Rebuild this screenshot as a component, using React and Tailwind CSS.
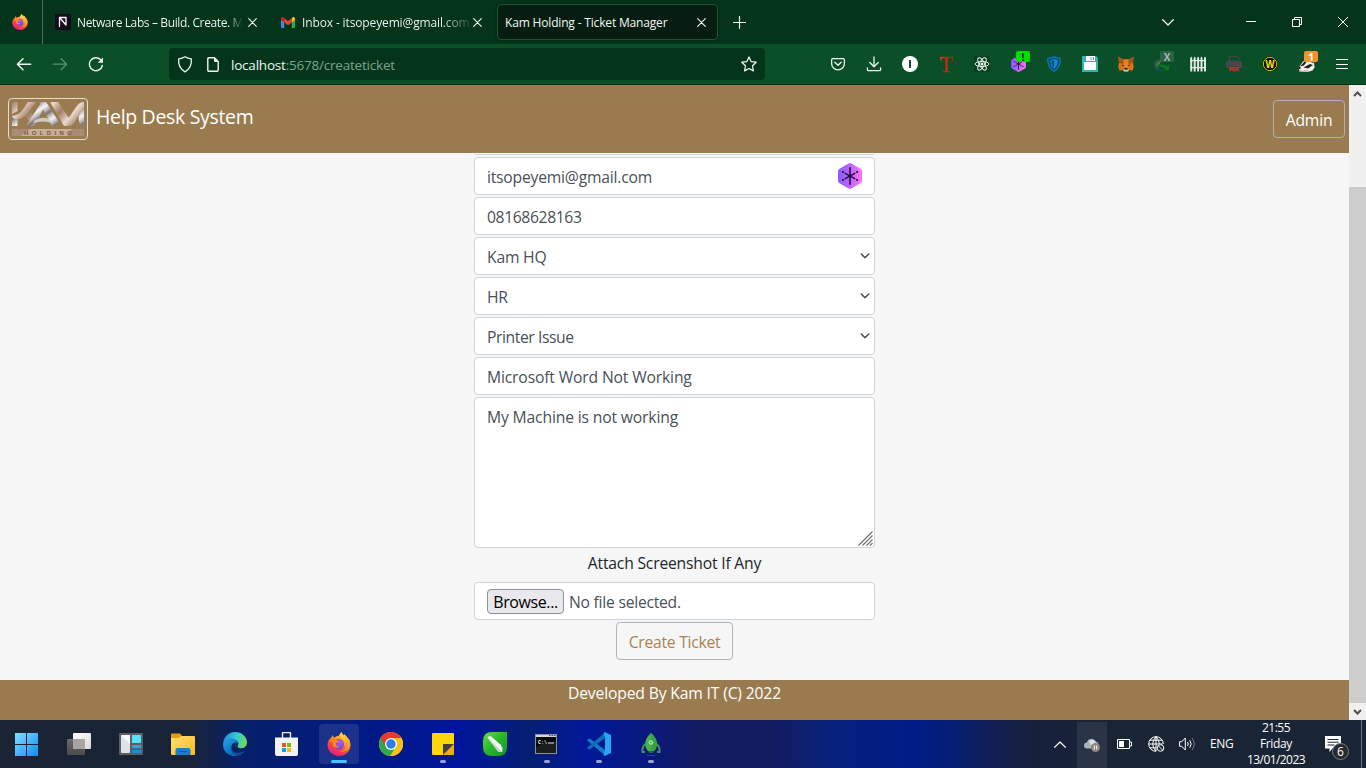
import React from "react";

const stroke = { fill: "none", stroke: "currentColor", strokeLinecap: "round", strokeLinejoin: "round" };

function Svg({ w = 16, h = w, vb, className = "", children, ...rest }) {
  return (
    <svg width={w} height={h} viewBox={vb || `0 0 ${w} ${h}`} className={"block shrink-0 " + className} {...rest}>
      {children}
    </svg>
  );
}

function Firefox({ size, id }) {
  return (
    <Svg w={size} vb="0 0 24 24">
      <defs>
        <linearGradient id={id + "a"} x1="0.8" y1="0" x2="0.3" y2="1">
          <stop offset="0" stopColor="#fff44f" />
          <stop offset="0.35" stopColor="#ffa21c" />
          <stop offset="0.65" stopColor="#ff4a3d" />
          <stop offset="1" stopColor="#e31587" />
        </linearGradient>
        <radialGradient id={id + "b"} cx="0.6" cy="0.3" r="0.8">
          <stop offset="0" stopColor="#b45cff" />
          <stop offset="1" stopColor="#5b3fd0" />
        </radialGradient>
        <linearGradient id={id + "c"} x1="0.2" y1="0" x2="0.8" y2="1">
          <stop offset="0" stopColor="#ffe04a" />
          <stop offset="1" stopColor="#ff8a1a" />
        </linearGradient>
      </defs>
      <path d="M4.6 5.2C5 4.2 5.3 3.4 5.6 3c.2 1.200.8 2 1.500 2.600 1.200-.9 2.700-1.600 4.400-1.600 1-1.500 2-3 3.200-4 .2 1.600 1 2.600 2.100 3.600.2-.4.3-.8.3-1.300 2.200 1.700 3.400 3.600 3.900 5.600.3-.3.5-.7.6-1.100 1.200 2 1.900 4.200 1.900 6.200C23.500 19.200 18.400 24 12 24S.5 19.200.5 12.800c0-3 1.500-5.900 4.100-7.600z" fill={`url(#${id}a)`} />
      <circle cx="11.800" cy="12.300" r="5.200" fill={`url(#${id}b)`} />
      <path d="M14.700 0c-1.200 2.700-.6 4.800 1.100 6.800 1.700 1.900 2.600 4.100 1.500 6.700 1.500-.7 2.100-1.900 2.300-3.100 1 5.100-2.700 9.200-7.200 9.300 7.200 1 11.100-3.600 10.600-9.400-.3-2.700-2.200-5.200-5.900-7.900-.1.700-.2.900-.3 1.200C15.700 2.600 14.900 1.600 14.700 0z" fill={`url(#${id}c)`} />
      <path d="M2.500 9.500c2-1.800 4.200-2.100 6.500-1.400 1 .3 2 .7 3.200.8-.1.900-1.300 1.400-2.500 1.700-.9.300-1 1.300-.7 2.200.5 1.500 2 2 3.700 1.600-1.700 2.200-5.600 1.500-6.700-1.300-.5-1.400-.2-2.500.2-3.200-1.500-.5-2.700-.4-3.700-.4z" fill="#ff8a1f" />
    </Svg>
  );
}

function Gmail() {
  return (
    <Svg w={14} h={11} vb="0 0 28 22">
      <path d="M0 4v16c0 1.200.8 2 2 2h4.500V9z" fill="#4285f4" />
      <path d="M28 4v16c0 1.200-.8 2-2 2h-4.500V9z" fill="#34a853" />
      <path d="M21.500 3v8L28 6V3c0-2.800-3-4-5.200-2.200z" fill="#fbbc04" />
      <path d="M0 3v3l6.500 5V3L5.200.9C3-.8 0 .3 0 3z" fill="#c5221f" />
      <path d="M6.500 2.500v8.300l7.500 5.600 7.500-5.600V2.500L14 8.200z" fill="#ea4335" />
    </Svg>
  );
}

const Cross = ({ className = "" }) => (
  <Svg w={9} className={className}><path d="M.7.7l7.600 7.600M8.300.7L.7 8.300" {...stroke} strokeWidth="1.100" /></Svg>
);

function TabBar() {
  return (
    <div className="flex h-11 shrink-0 items-center bg-[#04341a] text-[12px] text-[#f4f8f5]">
      <div className="flex h-full w-[43px] items-center border-r border-[#4a6e58] pl-3">
        <Firefox size={16} id="ft" />
      </div>
      <div className="flex w-[225px] items-center pl-3">
        <Svg w={16}>
          <rect width="16" height="16" fill="#170b20" />
          <path d="M4.500 12.500V3.500l6.500 7.500V3.500M4.500 3.500H11M4.500 6v6.500" {...stroke} stroke="#fff" strokeWidth="1.300" />
        </Svg>
        <div className="ml-1.5 w-[166px] overflow-hidden whitespace-pre bg-linear-to-r from-white from-91% to-[#04341a] to-100% bg-clip-text pt-[2px] tracking-[-0.38px] text-transparent">Netware Labs – Build. Create. M</div>
        <Cross className="ml-[5px]" />
      </div>
      <div className="flex w-[229px] items-center pl-[13px]">
        <Gmail />
        <div className="ml-[7px] w-[167px] overflow-hidden whitespace-nowrap bg-linear-to-r from-white from-83% to-[#2b5239] to-100% bg-clip-text pt-[2px] tracking-[-0.13px] text-transparent">Inbox - itsopeyemi@gmail.com</div>
        <Cross className="ml-1" />
      </div>
      <div className="flex h-9 w-[221px] items-center rounded-[4px] border border-[#155a31] bg-[#071d11] pl-[7px] shadow-[0_0_3px_rgba(0,0,0,.5)]">
        <span className="w-[192px] pt-[2px] whitespace-nowrap tracking-[-0.17px]">Kam Holding - Ticket Manager</span>
        <Cross className="shrink-0" />
      </div>
      <Svg w={13} className="ml-[15px]"><path d="M6.500.5v12M.5 6.500h12" {...stroke} strokeWidth="1.200" /></Svg>
      <Svg w={12} h={7} className="ml-auto"><path d="M.7.7L6 6 11.300.7" {...stroke} strokeWidth="1.300" /></Svg>
      <Svg w={10} className="ml-[72px]"><path d="M0 4.500h10" stroke="#fff" /></Svg>
      <Svg w={10} className="ml-9"><path d="M.5 2.500h7v7h-7zM2.500 2.500v-2h7v7h-2" fill="none" stroke="#fff" /></Svg>
      <Svg w={10} className="mr-[18px] ml-9"><path d="M0 0l10 10M10 0L0 10" stroke="#fff" /></Svg>
    </div>
  );
}

function Hexagon({ w, h }) {
  return (
    <Svg w={w} h={h} vb="0 0 24 26">
      <defs>
        <linearGradient id="hexg" x1="0" x2="1">
          <stop offset="0.05" stopColor="#8b5cff" />
          <stop offset="0.5" stopColor="#bd65fb" />
          <stop offset="1" stopColor="#ff70f5" />
        </linearGradient>
      </defs>
      <path d="M10.600.5q1.400-.8 2.800 0l9 5.200q1.600.9 1.600 2.600v9.400q0 1.700-1.600 2.600l-9 5.200q-1.400.8-2.800 0l-9-5.200Q0 19.400 0 17.700V8.300q0-1.700 1.600-2.600z" fill="url(#hexg)" />
      <g stroke="#2a0f45" strokeLinecap="round">
        <path d="M12 4.800v16.400" strokeWidth="1.600" />
        <path d="M10.500 12.200L7.300 10.300M13.500 12.200l3.200-1.900M10.500 13.800L7.300 15.700M13.500 13.800l3.200 1.900" strokeWidth="1.400" />
        <path d="M5 9.100h.1M19 9.100h.1M5 16.900h.1M19 16.900h.1" strokeWidth="2" />
        <path d="M10.500 13h3" strokeWidth="1.500" />
      </g>
    </Svg>
  );
}

const Pocket = () => <Svg w={16}><path d="M2.800 2.700h10.400q1.200 0 1.200 1.200v3.600a6.400 6.400 0 0 1-12.800 0V3.900q0-1.200 1.200-1.200zM4.800 6.300L8 9.300l3.200-3" {...stroke} strokeWidth="1.300" /></Svg>;
const Download = () => <Svg w={16}><path d="M8 .8v9.700M3.800 6.500L8 10.700l4.200-4.200M1.400 12v1.500q0 1.200 1.200 1.200h10.800q1.200 0 1.200-1.200V12" {...stroke} strokeWidth="1.300" /></Svg>;
const CircleI = () => <Svg w={16}><circle cx="8" cy="8" r="8" fill="#fff" /><rect x="7" y="4" width="2" height="8" fill="#0b4f28" /></Svg>;
const LetterT = () => (
  <Svg w={24} h={32}>
    <defs><linearGradient id="tg" x1="0" x2="1"><stop offset="0" stopColor="#ef5a41" /><stop offset="0.5" stopColor="#d02a12" /><stop offset="1" stopColor="#6b1b08" /></linearGradient></defs>
    <text x="12" y="23.500" textAnchor="middle" fontFamily="Liberation Serif, serif" fontSize="23" textLength="13" lengthAdjust="spacingAndGlyphs" fill="url(#tg)" stroke="#b02a12" strokeWidth=".4">T</text>
  </Svg>
);
const ReactLogo = () => (
  <Svg w={16}>
    <rect width="16" height="16" fill="#0a4020" />
    <g fill="none" stroke="#e3efe7" strokeWidth="1">
      <ellipse cx="8" cy="8" rx="6.900" ry="2.600" />
      <ellipse cx="8" cy="8" rx="6.900" ry="2.600" transform="rotate(60 8 8)" />
      <ellipse cx="8" cy="8" rx="6.900" ry="2.600" transform="rotate(120 8 8)" />
    </g>
    <circle cx="8" cy="8" r="1.500" fill="#fff" />
  </Svg>
);
const BlueShield = () => (
  <Svg w={14} h={16}>
    <path d="M.8 2.300Q4.500 2 7 .8q2.500 1.200 6.200 1.500Q13.700 11.500 7 15.200.3 11.500.8 2.300z" fill="#07486a" stroke="#0a7cb8" strokeWidth="1.300" />
    <path d="M3.800 4.300Q5.800 4 7 3.500q1.200.5 3.200.8Q10.400 9.500 7 12 3.600 9.500 3.800 4.300z" fill="#07486a" stroke="#0a8bd0" strokeWidth="1.200" />
    <path d="M7 3.500v8.500Q10.400 9.500 10.200 4.300 8 4 7 3.500z" fill="#0a8bd0" />
  </Svg>
);
const Floppy = () => <Svg w={16}><path d="M0 0h14l2 2v14H0z" fill="#2fb5ae" /><path d="M2 6h12v8H2zM4 0h9v5H4z" fill="#fff" /><path d="M8.500 1h1v3h-1zM11 1h1v3h-1z" fill="#2fb5ae" /></Svg>;
const Fox = () => (
  <Svg w={16}>
    <path d="M.3.700l5.200 2.800h5L15.700.7l-.7 6 .8 4-1.300 4-3.500-.8-1 1.600H6l-1-1.600-3.500.8-1.300-4 .8-4z" fill="#d9711c" />
    <path d="M.3.700L6 4.500 5 8 1 6.700zM15.700.7L10 4.500 11 8l4-1.300z" fill="#a5521c" />
    <path d="M5.500 3.500h5L9.800 12H6.200z" fill="#e8821e" />
    <path d="M3.700 8.200l2.600 1.600-1.500.5zM12.300 8.200L9.700 9.800l1.500.5z" fill="#263036" />
    <path d="M6.200 12h3.600l1 2.400-.9 1H6.100l-.9-1z" fill="#c9c2b8" /><path d="M6.500 12h3l.4 1.500H6.100z" fill="#1a1a1a" />
  </Svg>
);
const Globe = () => (
  <Svg w={16}>
    <path d="M.5 10.500A7 4.500 0 0 1 10 4.200C5.500 5.200 4 8 5 12.500 2 13.500.8 12.500.5 10.500z" fill="#205b57" />
    <path d="M2 9.500C3 6 6 4 10 4.200c-3 1-4.500 3-5 5z" fill="#777325" />
    <path d="M3 9c4-1.200 8 .2 10 1.200l2.500-1.700-1 6-4.500-.4 1.500-1.200C8.500 11.500 6 10.500 3 9z" fill="#087a1c" />
    <path d="M2 13q4 2.800 7.500 1.500" {...stroke} stroke="#25496b" />
  </Svg>
);
const Fence = () => (
  <Svg w={16}>
    <g fill="#dfe8e2">
      {[0.2, 3.7, 7.1, 10.500, 14].map((x) => <path key={x} d={`M${x} 2l1-1.500 1 1.500v13.500h-2z`} />)}
      <path d="M0 4h16v1.300H0zM0 11h16v1.300H0z" />
    </g>
  </Svg>
);
const Printer = () => (
  <Svg w={16}>
    <path d="M3.500.5h8l1.200 1.200V5H3.500z" fill="none" stroke="#45484a" strokeWidth="1" />
    <path d="M0 6.500Q0 5 1.500 5h13Q16 5 16 6.500V12H0z" fill="#46494a" /><rect x="2.500" y="10" width="11" height="6" fill="#37403a" />
    <text x="8" y="15" textAnchor="middle" fontFamily="Liberation Sans, sans-serif" fontWeight="bold" fontSize="5" fill="#e0392b">PDF</text>
  </Svg>
);
const WCircle = () => (
  <Svg w={16}>
    <circle cx="8" cy="8" r="7.500" fill="#0b0b05" /><circle cx="8" cy="8" r="6.700" fill="none" stroke="#d8c200" strokeWidth="1" />
    <text x="8" y="11.800" textAnchor="middle" fontFamily="Liberation Sans, sans-serif" fontWeight="bold" fontSize="10.500" textLength="9" lengthAdjust="spacingAndGlyphs" fill="#ffe600">W</text>
  </Svg>
);
const Badger = () => (
  <Svg w={17} h={16}>
    <path d="M.5 12L5 5.500l6-3 5 3 .5 6-2 3-5 1.500-8-.5z" fill="#f2f2f0" />
    <path d="M2 10.500L6.500 5.500 10 4 6 9.500zM5.500 11.500L12 8l3 1-5 3.500z" fill="#20201e" />
    <path d="M11 2l5 3-.5 2.500L9 4z" fill="#55534f" />
    <path d="M1 14q4 1.500 8 0l3 1.500H2z" fill="#d89a82" /><circle cx="1.500" cy="12" r="1.200" fill="#222" />
  </Svg>
);
const Menu = () => <Svg w={12} h={10}><path d="M0 .5h12M0 5h12M0 9.500h12" stroke="#fff" strokeWidth="1" shapeRendering="crispEdges" /></Svg>;

function Ext({ children, badge, badgeClass }) {
  return (
    <div className="relative flex h-9 w-9 items-center justify-center">
      {children}
      {badge && <span className={"absolute top-[5px] left-4 flex h-[11px] w-[14px] items-center justify-center rounded-[2px] text-[10px] font-bold leading-none " + badgeClass}>{badge}</span>}
    </div>
  );
}

function Toolbar() {
  return (
    <div className="flex h-[41px] shrink-0 items-center border-b border-[#04301a] bg-[#0a4f28] text-[#f0f6f2]">
      <Svg w={16} className="ml-4"><path d="M14.700 8.200H1.500M7 2.700L1.400 8.200 7 13.700" {...stroke} strokeWidth="1.400" /></Svg>
      <Svg w={16} className="ml-5 text-[#5c8f70]"><path d="M1.300 8.200h13.200M9 2.700l5.600 5.500L9 13.700" {...stroke} strokeWidth="1.300" /></Svg>
      <Svg w={16} className="ml-5"><path d="M14.300 9.500A6.500 6.500 0 1 1 12.700 3.800" {...stroke} strokeWidth="1.400" /><path d="M15 1.500v5.200h-5.200z" fill="currentColor" /></Svg>
      <div className="ml-[65px] flex h-8 w-[596px] items-center rounded-[4px] bg-[#04341a] px-2">
        <Svg w={16} h={17}><path d="M8 .8q2.800 1.700 6.300 2.100.9 8.800-6.300 13Q.8 11.700 1.700 2.900 5.200 2.500 8 .8z" {...stroke} strokeWidth="1.300" /></Svg>
        <Svg w={12} h={15} className="ml-[14px]"><path d="M2 .8h5.500l3.700 3.700V13q0 1.200-1.200 1.200H2Q.8 14.200.8 13V2Q.8.8 2 .8z" {...stroke} strokeWidth="1.400" /><path d="M7.500.8v3.700h3.700z" fill="currentColor" stroke="currentColor" /></Svg>
        <span className="ml-3 pt-[2px] text-[13.5px] tracking-[-0.21px] whitespace-nowrap text-[#7ea38b]"><span className="text-[#f0f6f2]">localhost</span>:5678/createticket</span>
        <Svg w={16} className="ml-auto"><path d="M8 .9l2.100 4.700 5.100.6-3.700 3.500.9 5.200L8 12.500l-4.400 2.400.9-5.200L.8 6.200l5.100-.6z" {...stroke} strokeWidth="1.200" /></Svg>
      </div>
      <div className="ml-[55px] flex">
        <Ext><Pocket /></Ext>
        <Ext><Download /></Ext>
        <Ext><CircleI /></Ext>
        <Ext><LetterT /></Ext>
        <Ext><ReactLogo /></Ext>
        <Ext badge="!" badgeClass="bg-[#00dd00] text-black"><Hexagon w={15} h={16} /></Ext>
        <Ext><BlueShield /></Ext>
        <Ext><Floppy /></Ext>
        <Ext><Fox /></Ext>
        <Ext badge="X" badgeClass="bg-[#2f6148] text-[#a6bcae]"><Globe /></Ext>
        <Ext><Fence /></Ext>
        <Ext><Printer /></Ext>
        <Ext><WCircle /></Ext>
        <Ext badge="1" badgeClass="bg-[#f0932b] text-white"><Badger /></Ext>
        <Ext><Menu /></Ext>
      </div>
    </div>
  );
}

function KamLogo() {
  return (
    <div className="h-[42px] w-20 rounded-[4px] border border-[#e2ddd5] p-[3px]">
      <Svg w={72} h={34}>
        <defs>
          <linearGradient id="silver" x1="0" y1="0" x2="4" y2="6" gradientUnits="userSpaceOnUse" spreadMethod="reflect">
            <stop offset="0" stopColor="#77726f" /><stop offset="0.4" stopColor="#b5b3b5" /><stop offset="1" stopColor="#f4f4f7" />
          </linearGradient>
          <linearGradient id="copper" x1="0" y1="0" x2="8" y2="7" gradientUnits="userSpaceOnUse" spreadMethod="reflect">
            <stop offset="0" stopColor="#a08069" /><stop offset="0.5" stopColor="#c2a793" /><stop offset="1" stopColor="#ead9cd" />
          </linearGradient>
        </defs>
        <g>
          <path d="M0 0h5.500v9L0 12z" fill="url(#copper)" />
          <path d="M0 14l5.500-2v12H0z" fill="url(#silver)" />
          <path d="M0 14Q7 14 12 6L16 0h8l-8 11Q11 18 2 17z" fill="url(#copper)" />
          <path d="M14 14l5-4 3 5-4 6z" fill="url(#copper)" />
          <path d="M14 24L27 4q3-5 6 0l-9 17q-2 3-4 3z" fill="url(#silver)" />
          <path d="M27 0h7l13 20-3 4h-4z" fill="url(#silver)" />
          <path d="M23 18q8-4 14-1l3 4q-9-3-19 0z" fill="#cfc9c6" />
          <path d="M38 0h8l13 19-3 5h-4z" fill="url(#copper)" />
          <path d="M72 0q-5 0-8 5L54 20l3 4q3 0 5-3L72 6z" fill="url(#copper)" />
          <path d="M72 6q-8 7-4 17l4 1z" fill="url(#silver)" />
        </g>
        <rect x="0" y="27" width="72" height="7" rx="2.500" fill="#c6ad9a" />
        <path d="M0 34v-4.500Q0 27 2.500 27H18L9 34zM72 34v-4.500Q72 27 69.500 27H60l-5 7z" fill="#a98c76" />
        <text x="12" y="32.800" fontFamily="Liberation Sans, sans-serif" fontWeight="bold" fontSize="6" textLength="48" fill="#75593a">HOLDING</text>
      </Svg>
    </div>
  );
}

const FIELD = "flex h-[38px] w-full items-center rounded-[4px] border border-[#ced4da] bg-white px-3 text-[15.7px] text-[#495057]";

function Select({ children, spacing = "tracking-[-0.2px]" }) {
  return (
    <div className={FIELD + " pr-[4px]! pt-[4px] justify-between"}>
      <span className={spacing}>{children}</span>
      <Svg w={10} h={6} className="mb-[4px]"><path d="M1.300 1l3.700 3.700L8.700 1" {...stroke} strokeWidth="1.600" /></Svg>
    </div>
  );
}

function Page() {
  return (
    <div className="flex h-[635px] shrink-0">
      <div className="flex w-[1349px] flex-col bg-[#f6f6f6]">
        <header className="flex h-[68px] shrink-0 items-center bg-[#9a7b4f] pr-1 pl-2 text-white">
          <KamLogo />
          <span className="ml-2 pb-[4px] text-[19.5px] tracking-[-0.33px] whitespace-nowrap">Help Desk System</span>
          <button className="ml-auto flex h-[38px] w-[72px] items-center justify-center rounded-[4px] border border-[#adb0b8] pt-[4px] text-[15.7px] tracking-[-0.2px]">Admin</button>
        </header>
        <main className="flex grow flex-col items-center">
          <div className="flex w-[401px] flex-col items-center gap-0.5">
            <div className="h-[2px] w-full rounded-b-[4px] border-b border-[#ced4da] bg-white" />
            <div className={FIELD + " justify-between pt-[4px]"}>
              <span className="tracking-[-0.22px]">itsopeyemi@gmail.com</span>
              <span className="mb-[5px]"><Hexagon w={24} h={26} /></span>
            </div>
            <div className={FIELD + " pt-[4px]"}><span className="tracking-[-0.38px]">08168628163</span></div>
            <Select>Kam HQ</Select>
            <Select>HR</Select>
            <Select spacing="tracking-[-0.42px]">Printer Issue</Select>
            <div className={FIELD + " pt-[4px]"}><span className="tracking-[-0.16px]">Microsoft Word Not Working</span></div>
            <div className="flex h-[151px] w-full items-end justify-between rounded-[4px] border border-[#ced4da] bg-white pr-px pb-px pl-3 text-[15.7px] text-[#495057]">
              <span className="self-start pt-2 tracking-[-0.16px]">My Machine is not working</span>
              <Svg w={15}><path d="M.5 14.500L14.500.5M4.500 14.500l10-10M8.500 14.500l6-6M12 14.500l2.500-2.500" stroke="#6d6d6d" strokeWidth="1.100" /></Svg>
            </div>
          </div>
          <label className="flex h-[34px] items-center pb-[2px] text-[15.7px] tracking-[-0.2px] text-[#212529]">Attach Screenshot If Any</label>
          <div className="flex w-[401px] flex-col items-center gap-0.5">
            <div className={FIELD}>
              <span className="flex h-[25px] w-[77px] items-center justify-center rounded-[4px] border border-[#8f8f9d] bg-[#e9e9ed] pt-px text-[16px] tracking-[-0.4px] text-black">Browse...</span>
              <span className="ml-[5px] pt-[4px] tracking-[-0.25px]">No file selected.</span>
            </div>
            <button className="flex h-[38px] w-[117px] items-center justify-center rounded-[4px] border border-[#adb5bd] pt-[4px] text-[15.7px] tracking-[-0.26px] text-[#a8834f]">Create Ticket</button>
          </div>
        </main>
        <footer className="flex h-10 shrink-0 justify-center bg-[#9a7b4f] pt-[2px] text-[15.7px] tracking-[-0.16px] text-white">Developed By Kam IT (C) 2022</footer>
      </div>
      <div className="flex w-[17px] flex-col items-center bg-[#f0f0f0] text-[#505050]">
        <div className="flex h-[17px] items-center"><Svg w={9} h={6}><path d="M1 5l3.500-3.500L8 5" fill="none" stroke="currentColor" strokeWidth="2" /></Svg></div>
        <div className="mt-[85px] w-full grow bg-[#cdcdcd]" />
        <div className="flex h-[17px] items-center"><Svg w={9} h={6}><path d="M1 1l3.500 3.500L8 1" fill="none" stroke="currentColor" strokeWidth="2" /></Svg></div>
      </div>
    </div>
  );
}

const WinStart = () => (
  <Svg w={24} h={23}>
    <defs><linearGradient id="wing" x1="0" y1="0" x2="1" y2="1"><stop offset="0" stopColor="#86dcff" /><stop offset="1" stopColor="#0a8df2" /></linearGradient></defs>
    <path d="M0 0h11v11H0zM12 0h11v11H12zM0 12h11v11H0zM12 12h11v11H12z" fill="url(#wing)" />
  </Svg>
);
const TaskView = () => (
  <Svg w={24} h={22}>
    <defs>
      <linearGradient id="tv1" x1="0" y1="0" x2="1" y2="1"><stop offset="0" stopColor="#fff" /><stop offset="1" stopColor="#d8d8d8" /></linearGradient>
      <linearGradient id="tv2" x1="0" y1="0" x2="0" y2="1"><stop offset="0" stopColor="#6b6b6b" /><stop offset="1" stopColor="#4a4a4a" /></linearGradient>
    </defs>
    <rect y="6" width="18" height="16" rx="1" fill="url(#tv2)" /><rect x="6" width="18" height="16" rx="1" fill="url(#tv1)" /><path d="M6 6h12v10H6z" fill="#a5a5a5" />
  </Svg>
);
const Widgets = () => (
  <Svg w={24} h={22}>
    <rect width="24" height="22" rx="1" fill="#5c5f63" />
    <rect x="2" y="2" width="9" height="18" rx="1" fill="#dfe3e8" /><path d="M2 2h9v9z" fill="#f8f9fb" />
    <rect x="13" y="2" width="9" height="8" rx=".7" fill="#50e6ff" /><rect x="13" y="12" width="9" height="3" fill="#28a8ea" /><rect x="13" y="17" width="9" height="3" fill="#1490df" />
  </Svg>
);
const Folder = () => (
  <Svg w={24} h={22}>
    <defs><linearGradient id="fog" x1="0" y1="0" x2="1" y2="1"><stop offset="0" stopColor="#ffe07a" /><stop offset="1" stopColor="#fdb813" /></linearGradient></defs>
    <path d="M0 1.500Q0 .5 1 .5h8l2.500 3L9 6H0z" fill="#e3a008" /><path d="M0 5h8l2.500-2H23q1 0 1 1v17q0 1-1 1H1q-1 0-1-1z" fill="url(#fog)" />
    <path d="M4.500 22v-5q0-2 2-2h11q2 0 2 2v5z" fill="#1580cf" /><path d="M8 18.500h8" stroke="#0d5a9b" strokeWidth="1" />
  </Svg>
);
const Edge = () => (
  <Svg w={24}>
    <defs>
      <linearGradient id="eg1" x1="0" y1="0.3" x2="1" y2="0.500"><stop offset="0" stopColor="#1b91dd" /><stop offset="0.5" stopColor="#35c4dc" /><stop offset="1" stopColor="#69e054" /></linearGradient>
      <linearGradient id="eg2" x1="0" y1="0" x2="0.600" y2="1"><stop offset="0" stopColor="#28a4e8" /><stop offset="1" stopColor="#0865c0" /></linearGradient>
    </defs>
    <path d="M.3 10.500C1 4.500 6 0 12 0c7 0 12 5 12 10.200 0 4-3 6-6 6-2.500 0-4-1-3.500-2.200 1-1.200 1.200-2.500.5-4C13 6.500 4 5 .3 10.500z" fill="url(#eg1)" />
    <path d="M.1 12C.7 7 7 5 11.500 7.300c2.500 1.200 3.700 3 3.500 4.200-2-2-5.500-1-6.400 2C7.500 18 11 21.500 14.500 23.700 6 25.500-.5 19 .1 12z" fill="url(#eg2)" />
    <path d="M8.600 13.500c-1.200 4 2 7 5.400 7.200 3.300.3 6-.8 8.300-2.200-2 3-4.800 4.800-7.800 5.200C10 22.500 6 18.500 8.600 13.500z" fill="#0c4f91" />
    <path d="M10.500 11.200q2.500-1 4.500.3.300 1.500-.7 2.700-.3 1 .7 1.700-4 .5-4.500-4.700z" fill="#14306a" />
  </Svg>
);
const Store = () => (
  <Svg w={24}>
    <path d="M7.500 6V1.200q0-.7.7-.7h6.600q.7 0 .7.700V6" fill="none" stroke="#eee" strokeWidth="1.400" />
    <path d="M0 5.500h23V22q0 2-2 2H2q-2 0-2-2z" fill="#f3f3f3" />
    <path d="M7 11h4v4H7z" fill="#f25022" /><path d="M12 11h4v4h-4z" fill="#7fba00" /><path d="M7 16h4v4H7z" fill="#00a4ef" /><path d="M12 16h4v4h-4z" fill="#ffb900" />
  </Svg>
);
const Chrome = () => (
  <Svg w={24}>
    <circle cx="12" cy="12" r="12" fill="#fbc116" />
    <path d="M1.600 6a12 12 0 0 0 9.600 18l5.600-9.200L12 12z" fill="#2da94f" />
    <path d="M22.400 6H12l5 9-5.800 9A12 12 0 0 0 22.400 6z" fill="#fbc116" />
    <path d="M1.600 6l5.200 9L12 6h10.400A12 12 0 0 0 1.600 6z" fill="#e33b2e" />
    <circle cx="12" cy="12" r="6" fill="#fff" /><circle cx="12" cy="12" r="4.700" fill="#2b7de9" />
  </Svg>
);
const Sticky = () => <Svg w={22}><path d="M1 0h20q1 0 1 1v10L11 22H1q-1 0-1-1V1q0-1 1-1z" fill="#ffd60a" /><path d="M11 11h11L11 22z" fill="#404040" /><path d="M22 11v10q0 1-1 1H11z" fill="#f0ac0a" /></Svg>;
const Corel = () => (
  <Svg w={24}>
    <defs><linearGradient id="cog" x1="0" y1="0" x2="1" y2="1"><stop offset="0" stopColor="#68e03a" /><stop offset="0.5" stopColor="#26b62a" /><stop offset="1" stopColor="#17962b" /></linearGradient></defs>
    <path d="M9 0h15v15q0 9-9 9H9q-9 0-9-9V9q0-9 9-9z" fill="url(#cog)" />
    <path d="M4.500 5.500Q5 4 7 4.500l12.500 11-.3 4.500-4.200-.5z" fill="#f2f2f2" /><path d="M4.500 5.500L15 19.500l4.200.5z" fill="#c9cfc9" /><path d="M7 4.500l11 9.500" stroke="#fff" strokeWidth="1.500" />
  </Svg>
);
const Cmd = () => (
  <Svg w={24} h={20}>
    <rect x=".5" y=".5" width="21" height="19" fill="#050505" stroke="#8d9093" /><path d="M1 1h20v2H1z" fill="#cfd6dd" /><path d="M14 1.500h1.500M16.500 1.500H18M19 1.500h1.500" stroke="#444" />
    <path d="M1 13Q10 7 21 8v11H1z" fill="#1d1d1d" />
    <text x="3" y="9.500" fontFamily="Liberation Mono, monospace" fontSize="6" fontWeight="bold" textLength="9" lengthAdjust="spacingAndGlyphs" fill="#fff">C:\</text><path d="M13 9h6" stroke="#ddd" />
  </Svg>
);
const VsCode = () => (
  <Svg w={24}>
    <path d="M0 8.300l1.600-1.500 1.500-.1L18 18v5.500z" fill="#0f7fc9" /><path d="M0 15.700l1.600 1.500 1.500.1L18 6V.5z" fill="#0a6db5" />
    <path d="M17.500 0L24 3v18l-6.500 3q-.5-.2-.8-.8L18 18V6L16.700.8z" fill="#27a7f2" />
  </Svg>
);
const Rocket = () => (
  <Svg w={20} h={23}>
    <path d="M4.500 11Q1 13 1.500 19h2.500M15.500 11q3.500 2 3 8H16" fill="none" stroke="#4c8f5e" strokeWidth="2" />
    <path d="M10 0q5.500 4.500 6 11-.5 5-3 7H7q-2.500-2-3-7 .5-6.500 6-11z" fill="#45b04a" /><path d="M10 0q5.500 4.500 6 11-.5 5-3 7h-3z" fill="#3a9e43" />
    <circle cx="10" cy="9.500" r="2.200" fill="#b5e0be" /><circle cx="10" cy="9.500" r="1" fill="#4b9b5a" />
    <path d="M7 18h6l-1 2H8z" fill="#255f4e" /><ellipse cx="10" cy="22.500" rx="4.500" ry=".6" fill="#344e80" />
  </Svg>
);

const apps = [
  { icon: <WinStart /> }, { icon: <TaskView /> }, { icon: <Widgets /> }, { icon: <Folder /> }, { icon: <Edge /> }, { icon: <Store /> },
  { icon: <Firefox size={24} id="fb" />, active: true }, { icon: <Chrome /> }, { icon: <Sticky />, open: true }, { icon: <Corel /> },
  { icon: <Cmd />, open: true }, { icon: <VsCode />, open: true }, { icon: <Rocket />, open: true },
];

function Taskbar() {
  return (
    <div className="flex h-12 shrink-0 items-center bg-[linear-gradient(90deg,#1a2434_0px,#182338_190px,#06206a_245px,#021c7c_330px,#00159c_460px,#051f72_530px,#02189a_585px,#08197e_645px,#141b60_700px,#151b60_770px,#06207a_830px,#001c88_915px,#061e76_955px,#131f55_990px,#16203c_1036px,#192534_1130px)] pl-px text-[12px] text-white">
      {apps.map((a, i) => (
        <div key={i} className="flex w-[52px] justify-center">
          <div className={"relative flex h-10 w-10 items-center justify-center rounded-[4px] " + (a.active ? "bg-white/10" : "")}>
            {a.icon}
            {a.active && <span className="absolute bottom-[1px] h-[3px] w-4 rounded-full bg-[#4cc2ff]" />}
            {a.open && <span className="absolute bottom-[1px] h-[3px] w-1.5 rounded-full bg-[#98a4cf]" />}
          </div>
        </div>
      ))}
      <div className="ml-auto flex h-full items-center">
        <Svg w={12} h={7}><path d="M.7 6.200L6 1l5.300 5.200" {...stroke} strokeLinecap="square" strokeWidth="1.200" /></Svg>
        <div className="ml-[11px] flex h-[46px] w-[30px] items-center justify-center self-end bg-white/8">
          <Svg w={16} h={14}>
            <path d="M3 10.500a3 3 0 0 1 0-6A4.500 4.500 0 0 1 11.500 3.500 3 3 0 0 1 14 8v2.500z" fill="#aeb4be" /><path d="M5 3.500A4.500 4.500 0 0 1 12 4l-4 4z" fill="#dcdfe5" />
            <circle cx="11.500" cy="9.500" r="4.500" fill="#8c8782" /><path d="M10.300 7.500v4M12.700 7.500v4" stroke="#fff" />
          </Svg>
        </div>
        <Svg w={15} h={10} className="ml-[10px]"><path d="M.5.5h12v9H.5z" fill="none" stroke="#fff" /><path d="M2 2h5v6H2z" fill="#fff" /><path d="M13 3h1.500v4H13" fill="none" stroke="#fff" /></Svg>
        <Svg w={17} className="ml-4">
          <g fill="none" stroke="#fff" strokeWidth="1"><path d="M8 15.300A7.300 7.300 0 1 1 15.300 8" /><path d="M8 15.300Q1.500 8 8 .7 11.500 4.500 11.300 8M8 .7V15M.7 8h14M1.800 4.200h12.400M1.800 11.800H8" /><circle cx="12.500" cy="12" r="3.300" fill="#182334" /><path d="M10.300 9.800l4.500 4.500" /></g>
        </Svg>
        <Svg w={17} h={14} className="ml-[14px]">
          <path d="M.6 4.700h2.200L6.300 1v12L2.800 9.300H.6z" fill="none" stroke="#fff" /><path d="M8.500 5q1.500 2 0 4M10.700 3.300q3 3.700 0 7.400" fill="none" stroke="#fff" /><path d="M13 1q4.500 6 0 12" fill="none" stroke="#6f7886" />
        </Svg>
        <span className="ml-[14px] w-6 tracking-[-0.3px]">ENG</span>
        <div className="ml-[10px] flex w-[64px] flex-col items-center leading-4">
          <span className="tracking-[-0.5px]">21:55</span><span className="tracking-[-0.35px]">Friday</span><span className="tracking-[-0.57px]">13/01/2023</span>
        </div>
        <div className="relative ml-[17px] h-8 w-6">
          <Svg w={16} h={16} className="mt-2"><path d="M0 0h16v12.500H7.500L4.500 16v-3.500H0z" fill="#fff" /><path d="M2.500 3.500h11M2.500 6.200h11M2.500 9h7" stroke="#1a2534" /></Svg>
          <span className="absolute top-[15px] left-[7px] flex h-[17px] w-[17px] items-center justify-center rounded-full border border-[#777c80] bg-[#282b2e] text-[12px] leading-none">6</span>
        </div>
        <div className="mr-1 ml-[12px] h-full w-px bg-[#6b747e]" />
      </div>
    </div>
  );
}

export default function App() {
  return (
    <div className="flex h-[768px] w-[1366px] flex-col overflow-hidden font-['Open_Sans','Noto_Sans',sans-serif]">
      <TabBar />
      <Toolbar />
      <Page />
      <Taskbar />
    </div>
  );
}
